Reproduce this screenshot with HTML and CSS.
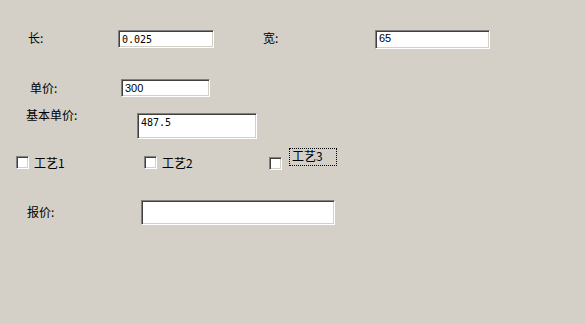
FILE: index.html
```html
<!DOCTYPE html>
<html lang="zh-CN">
<head>
<meta charset="utf-8">
<title>报价</title>
<link rel="stylesheet" href="styles.css">
</head>
<body>
<div class="dialog">
  <div class="row row-1">
    <span class="label label-len">长:</span>
    <div class="field field-len mono">0.025</div>
    <span class="label label-wid">宽:</span>
    <div class="field field-wid sans">65</div>
  </div>
  <div class="row row-2">
    <span class="label label-price">单价:</span>
    <div class="field field-price sans">300</div>
  </div>
  <div class="row row-3">
    <span class="label label-base">基本单价:</span>
    <div class="field field-base mono">487.5</div>
  </div>
  <div class="row row-4">
    <div class="check check-1"><span class="box"></span><span class="check-text">工艺1</span></div>
    <div class="check check-2"><span class="box"></span><span class="check-text">工艺2</span></div>
    <div class="check check-3"><span class="box"></span><span class="check-text focus">工艺3</span></div>
  </div>
  <div class="row row-5">
    <span class="label label-quote">报价:</span>
    <div class="field field-quote"></div>
  </div>
</div>
</body>
</html>
```
FILE: styles.css
```css
html, body {
  margin: 0;
  padding: 0;
  background: #d4d0c8;
}
body {
  width: 585px;
  height: 324px;
  overflow: hidden;
  font-family: "Noto Sans CJK SC", "Noto Sans", sans-serif;
  font-size: 12px;
  line-height: 12px;
  color: #000;
}
.dialog {
  display: flex;
  flex-direction: column;
}
.row {
  display: flex;
  align-items: flex-start;
}
.label {
  display: block;
  flex: none;
  white-space: nowrap;
}
.field {
  flex: none;
  box-sizing: border-box;
  background: #fff;
  border-style: solid;
  border-width: 1px;
  border-color: #808080 #ffffff #ffffff #808080;
  box-shadow: inset 1px 1px 0 #404040, inset -1px -1px 0 #d4d0c8;
  padding-left: 3px;
  line-height: 12px;
  white-space: nowrap;
  overflow: hidden;
}
.mono {
  font-family: "DejaVu Sans Mono", "Liberation Mono", monospace;
  font-size: 10px;
  padding-top: 3px;
}
.sans {
  font-family: "Liberation Sans", Arial, sans-serif;
  font-size: 11px;
}

/* row 1 */
.row-1 { margin-top: 30px; }
.label-len { margin-left: 28px; width: 90px; margin-top: 2px; }
.field-len { width: 96px; height: 18px; padding-top: 3px; }
.label-wid { margin-left: 49px; width: 112px; margin-top: 2px; }
.field-wid { width: 115px; height: 19px; padding-top: 1px; }

/* row 2 */
.row-2 { margin-top: 30px; }
.label-price { margin-left: 30px; width: 91px; margin-top: 3px; }
.field-price { width: 89px; height: 18px; padding-top: 2px; }

/* row 3 */
.row-3 { margin-top: 12px; }
.label-base { margin-left: 26px; width: 111px; margin-top: 0; }
.field-base { width: 120px; height: 26px; margin-top: 4px; padding-top: 3px; }

/* row 4: checkboxes */
.row-4 { margin-top: 9px; height: 22px; }
.check {
  display: flex;
  align-items: flex-start;
  flex: none;
}
.box {
  display: block;
  flex: none;
  box-sizing: border-box;
  width: 13px;
  height: 13px;
  background: #fff;
  border-style: solid;
  border-width: 1px;
  border-color: #808080 #ffffff #ffffff #808080;
  box-shadow: inset 1px 1px 0 #404040, inset -1px -1px 0 #d4d0c8;
}
.check-text {
  display: block;
  white-space: nowrap;
}
.check-1 { margin-left: 16px; width: 128px; }
.check-1 .box { margin-top: 8px; margin-right: 5px; }
.check-1 .check-text { margin-top: 9px; }
.check-2 { width: 125px; }
.check-2 .box { margin-top: 8px; margin-right: 5px; }
.check-2 .check-text { margin-top: 9px; }
.check-3 .box { margin-top: 9px; margin-right: 7px; }
.check-3 .focus {
  box-sizing: border-box;
  width: 48px;
  height: 18px;
  border: 1px dotted #000;
  padding: 1px 0 0 2px;
}

/* row 5 */
.row-5 { margin-top: 30px; }
.label-quote { margin-left: 27px; width: 114px; margin-top: 6px; }
.field-quote { width: 194px; height: 25px; }
```
